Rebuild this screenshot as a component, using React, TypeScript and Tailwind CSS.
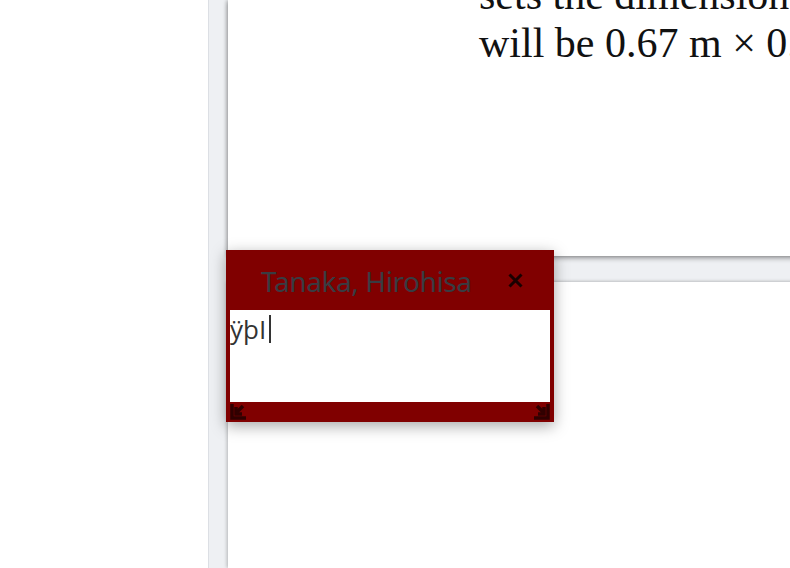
import React from "react";

function CornerIcon({ flip }: { flip?: boolean }) {
  return (
    <svg width="16" height="16" viewBox="0 0 16 16" className={flip ? "-scale-x-100 shrink-0" : "shrink-0"}>
      <g stroke="#300000" strokeWidth="3.5" fill="none">
        <path d="M2 0 V14 H16" />
        <path d="M13 2 L7 8" />
        <path d="M6 3 V10 H12" />
      </g>
    </svg>
  );
}

function StickyNote() {
  return (
    <div className="absolute left-[226px] top-[250px] w-[328px] h-[172px] bg-[#800000] shadow-[0_4px_14px_rgba(0,0,0,0.35)] flex flex-col">
      <div className="h-[60px] relative">
        <span
          className="absolute left-[35px] top-[12px] text-[28px] leading-[38px] text-[#383c42] tracking-[-0.4px]"
          style={{ fontFamily: '"Noto Sans", "Open Sans", sans-serif' }}
        >
          Tanaka, Hirohisa
        </span>
        <span className="absolute left-[281px] top-[22px]">
          <svg width="17" height="17" viewBox="0 0 17 17">
            <path d="M2.5 2.5 L14.5 14.5 M14.5 2.5 L2.5 14.5" stroke="#1a0000" strokeWidth="3" />
          </svg>
        </span>
      </div>
      <div className="mx-[4px] h-[92px] bg-white relative">
        <span
          className="absolute left-0 top-0 text-[26px] leading-[38px] text-[#333] flex items-center"
          style={{ fontFamily: '"Open Sans", "Noto Sans", sans-serif' }}
        >
          ÿþI
          <span className="inline-block w-[2px] h-[28px] bg-[#333] ml-[3px]"></span>
        </span>
      </div>
      <div className="flex-1 flex items-center justify-between px-[4px]">
        <CornerIcon />
        <CornerIcon flip />
      </div>
    </div>
  );
}

export default function App() {
  return (
    <div className="w-[790px] h-[568px] overflow-hidden relative flex bg-white">
      <div className="w-[208px] bg-white shrink-0" />
      <div className="flex-1 bg-[#eef0f3] border-l border-[#dcdfe4] pl-[19px] flex flex-col overflow-hidden">
        <div className="h-[256px] bg-white shadow-[0_2px_5px_rgba(0,0,0,0.4),-2px_0_3px_rgba(0,0,0,0.12)] shrink-0 relative overflow-hidden w-[700px]">
          <div
            className="absolute left-[251px] top-[-29px] text-[42px] leading-[48px] text-[#111] whitespace-nowrap"
            style={{ fontFamily: '"Liberation Serif", "DejaVu Serif", serif' }}
          >
            <div>sets the dimension</div>
            <div>will be 0.67 m × 0.5 m</div>
          </div>
        </div>
        <div className="h-[26px] shrink-0" />
        <div className="flex-1 bg-white shadow-[0_-1px_3px_rgba(0,0,0,0.15),-2px_0_3px_rgba(0,0,0,0.12)] w-[700px]" />
      </div>
      <StickyNote />
    </div>
  );
}
